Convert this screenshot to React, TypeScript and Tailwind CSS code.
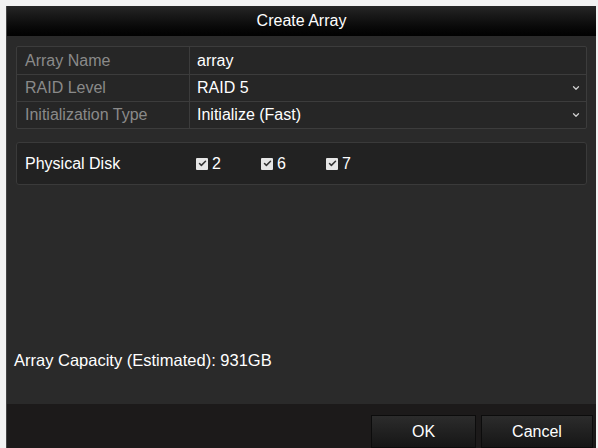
import { Check, ChevronDown } from "lucide-react";

const rows = [
  { label: "Array Name", value: "array", select: false },
  { label: "RAID Level", value: "RAID 5", select: true },
  { label: "Initialization Type", value: "Initialize (Fast)", select: true },
];

const disks = ["2", "6", "7"];

function DiskBox({ n }: { n: string }) {
  return (
    <div className="flex items-center gap-[4px] w-[65px]">
      <span className="w-[12px] h-[12px] bg-[#e6e6e6] rounded-[1px] flex items-center justify-center">
        <Check size={9} strokeWidth={4} className="text-[#333]" />
      </span>
      <span className="text-white">{n}</span>
    </div>
  );
}

export default function App() {
  return (
    <div
      className="w-[598px] h-[448px] bg-[#f2f2f2] pl-[6px] pt-[6px] pr-[2px] overflow-hidden"
      style={{ fontFamily: '"Liberation Sans", Arial, sans-serif' }}
    >
      <div className="h-full flex flex-col bg-[#2a2a2a] text-[16px] border-l border-[#444]">
        {/* Title */}
        <div className="h-[30px] shrink-0 flex items-center justify-center bg-gradient-to-b from-[#262626] to-[#020202] text-white text-[16px]">
          Create Array
        </div>

        {/* Settings table */}
        <div className="px-[9px] pt-[10px]">
          <div className="border border-[#3c3c3c] rounded-[2px] bg-[#262626]">
            {rows.map((r, i) => (
              <div
                key={r.label}
                className={`flex h-[27px] ${i > 0 ? "border-t border-[#3c3c3c]" : ""}`}
              >
                <div className="w-[173px] shrink-0 pl-[8px] flex items-center text-[#8a8a8a] border-r border-[#3c3c3c]">
                  {r.label}
                </div>
                <div className="flex-1 flex items-center pl-[7px] pr-[5px] text-white">
                  <span className="flex-1">{r.value}</span>
                  {r.select && (
                    <ChevronDown size={10} strokeWidth={3} className="text-[#cfcfcf]" />
                  )}
                </div>
              </div>
            ))}
          </div>

          {/* Physical disk */}
          <div className="mt-[13px] h-[43px] border border-[#3a3a3a] rounded-[3px] bg-[#222] flex items-center">
            <div className="w-[179px] pl-[8px] text-white">Physical Disk</div>
            <div className="flex">
              {disks.map((d) => (
                <DiskBox key={d} n={d} />
              ))}
            </div>
          </div>
        </div>

        <div className="flex-1 flex items-end pl-[7px] pb-[31px] text-white text-[16.5px]">
          Array Capacity (Estimated): 931GB
        </div>

        {/* Footer */}
        <div className="h-[44px] shrink-0 bg-[#1c1a1a] flex items-end justify-end gap-[5px] pr-[3px]">
          <button className="w-[105px] h-[33px] bg-gradient-to-b from-[#2c2c2c] to-[#161616] border border-[#0c0c0c] text-white text-[16px]">
            OK
          </button>
          <button className="w-[112px] h-[33px] bg-gradient-to-b from-[#2c2c2c] to-[#161616] border border-[#0c0c0c] text-white text-[16px]">
            Cancel
          </button>
        </div>
      </div>
    </div>
  );
}
